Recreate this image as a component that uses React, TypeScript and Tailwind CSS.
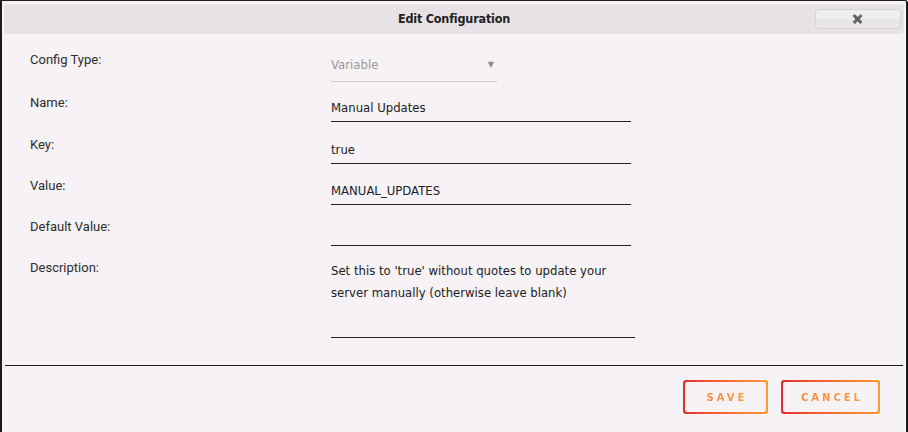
import React from "react";

const labelFont = { fontFamily: "Roboto, 'Liberation Sans', sans-serif" };
const fieldFont = { fontFamily: "'DejaVu Sans', 'Liberation Sans', sans-serif" };

function Row({ label, children, h }: { label: string; children: React.ReactNode; h: string }) {
  return (
    <div className={`flex ${h}`}>
      <div className="w-[329px] shrink-0 pl-[28px] pt-[1px] text-[13px] leading-[20px] text-[#2e2e2e]" style={labelFont}>
        {label}
      </div>
      <div className="flex-1">{children}</div>
    </div>
  );
}

function TextField({ value }: { value: string }) {
  return (
    <div className="w-[300px] h-[30px] border-b border-[#222] text-[11.7px] text-[#222] leading-[16px] pt-[8px]" style={fieldFont}>
      {value}
    </div>
  );
}

function OutlineButton({ label, w }: { label: string; w: string }) {
  return (
    <div className={`${w} h-[34px] rounded-[3px] p-[2px] bg-gradient-to-r from-[#e8282e] to-[#ff9a30]`}>
      <div className="w-full h-full rounded-[2px] bg-[#f6f2f5] flex items-center justify-center">
        <span
          className="text-[10px] font-bold tracking-[3px] bg-gradient-to-r from-[#ff8636] to-[#ff9c3c] bg-clip-text text-transparent pl-[3px]"
          style={fieldFont}
        >
          {label}
        </span>
      </div>
    </div>
  );
}

export default function App() {
  return (
    <div className="w-[908px] h-[432px] bg-[#f6f2f5] border-t border-l-2 border-r-2 border-[#1c1c1c] rounded-tr-[3px] flex flex-col overflow-hidden">
      <div className="px-[2px] pt-[3px]">
        <div className="h-[30px] rounded-[4px] bg-[#e7e2e6] flex items-center relative">
          <div
            className="flex-1 text-center text-[12.5px] font-bold text-[#222] tracking-[-0.2px]"
            style={{ fontFamily: "'DejaVu Sans Condensed', 'DejaVu Sans', sans-serif" }}
          >
            Edit Configuration
          </div>
          <div className="absolute right-[3px] top-[5px] w-[86px] h-[20px] rounded-[4px] border border-[#d6d2d6] bg-gradient-to-b from-[#efefef] from-50% to-[#e9e6e9] to-50% flex items-center justify-center text-[#999] text-[9px]">
            ✖
          </div>
        </div>
      </div>

      <div className="flex flex-col pt-[15px]">
        <Row label="Config Type:" h="h-[43px]">
          <div className="w-[166px] h-[33px] border-b border-[#cfcccf] flex items-start justify-between pt-[8px] leading-[16px] text-[11.7px] text-[#9a989a]" style={fieldFont}>
            <span>Variable</span>
            <span className="text-[8px] pr-[3px] text-[#8c8a8c]">▼</span>
          </div>
        </Row>
        <Row label="Name:" h="h-[42px]">
          <TextField value="Manual Updates" />
        </Row>
        <Row label="Key:" h="h-[41px]">
          <TextField value="true" />
        </Row>
        <Row label="Value:" h="h-[41px]">
          <TextField value="MANUAL_UPDATES" />
        </Row>
        <Row label="Default Value:" h="h-[41px]">
          <TextField value="" />
        </Row>
        <Row label="Description:" h="h-[81px]">
          <div className="w-[304px] h-[81px] border-b border-[#222] text-[11.7px] text-[#222] leading-[22px] pt-[3px]" style={fieldFont}>
            Set this to 'true' without quotes to update your server manually (otherwise leave blank)
          </div>
        </Row>
      </div>

      <div className="mt-[27px] mx-[3px] border-t border-[#1c1c1c]" />

      <div className="flex justify-end gap-[13px] pr-[26px] pt-[14px]">
        <OutlineButton label="SAVE" w="w-[85px]" />
        <OutlineButton label="CANCEL" w="w-[99px]" />
      </div>
    </div>
  );
}
